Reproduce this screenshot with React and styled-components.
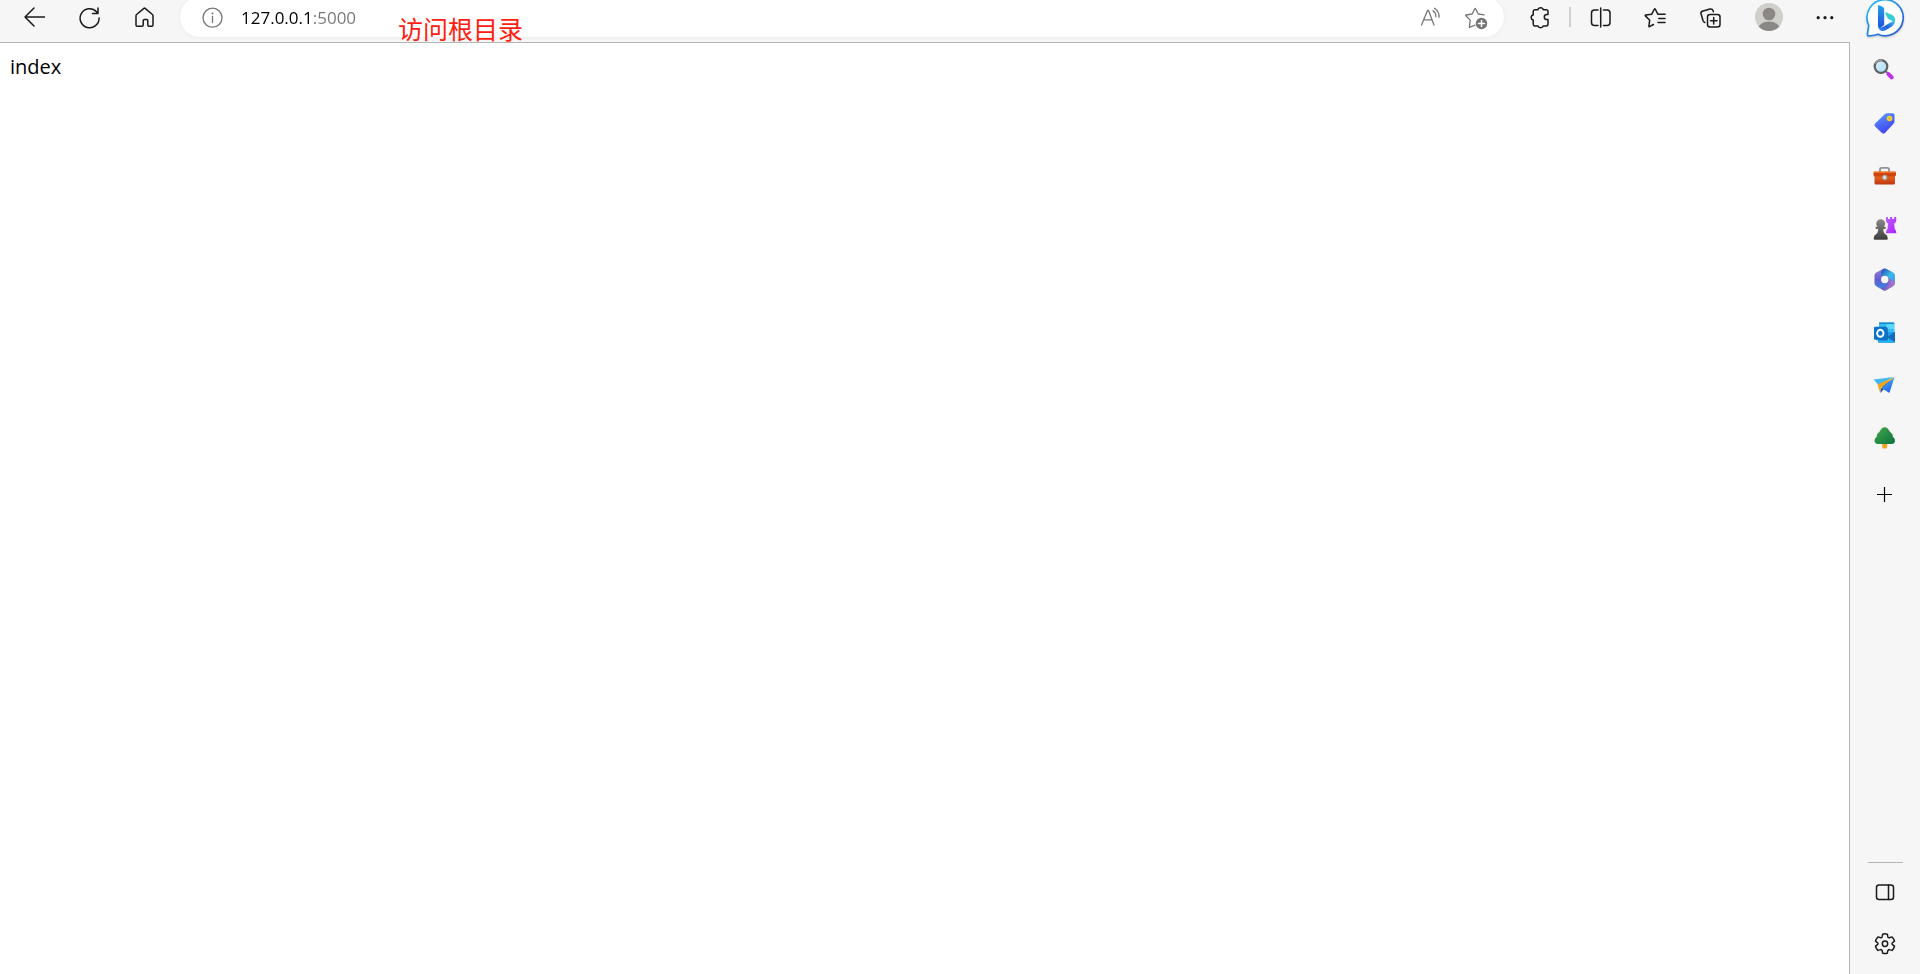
import React from "react";
import styled, { createGlobalStyle } from "styled-components";

const GlobalStyle = createGlobalStyle`
  *, *::before, *::after { box-sizing: border-box; }
  body { margin: 0; background: #f6f6f6; color: #000; font-family: "Open Sans", "Noto Sans CJK SC", sans-serif; }
`;

const Window = styled.div`
  display: grid;
  grid-template-columns: minmax(0, 1fr) 70px;
  min-height: 100vh;
`;

const Main = styled.div`
  display: flex;
  flex-direction: column;
`;

const Toolbar = styled.header`
  position: relative;
  display: flex;
  align-items: center;
  height: 42px;
  padding: 0 0 8px 7px;
`;

const IconButton = styled.button`
  display: flex;
  flex: none;
  align-items: center;
  justify-content: center;
  width: ${(p) => p.$width || 55}px;
  height: 34px;
  padding: 0;
  border: 0;
  background: none;
  color: ${(p) => p.$color || "#1b1b1b"};
`;

const Icon = styled.svg.attrs({ viewBox: "0 0 24 24", "aria-hidden": true })`
  display: block;
  width: 24px;
  height: 24px;
  overflow: visible;
  fill: none;
  stroke: ${(p) => (p.$art ? "none" : "currentColor")};
  stroke-width: 1.5;
  stroke-linecap: round;
  stroke-linejoin: round;
`;

const AddressBar = styled.form`
  display: flex;
  flex: 1;
  align-items: center;
  min-width: 0;
  height: 40px;
  margin: 0 8px;
  padding: 0 6px 0 12px;
  border-radius: 20px;
  background: #fff;
  box-shadow: 0 0 4px rgba(0, 0, 0, 0.06);
`;

const AddressInput = styled.input`
  flex: 1;
  min-width: 0;
  height: 34px;
  padding: 0 0 0 9px;
  border: 0;
  outline: 0;
  color: #111;
  font: 17px/24px "Open Sans", sans-serif;
  background: linear-gradient(90deg, #000 81px, #767676 81px);
  background-clip: text;
  -webkit-background-clip: text;
  -webkit-text-fill-color: transparent;
`;

const Divider = styled.span`
  flex: none;
  width: 2px;
  height: 20px;
  margin: 0 2px;
  background: #d0d0d0;
`;

const Note = styled.span`
  position: absolute;
  left: 398px;
  top: 10px;
  color: #ff2010;
  font: 25px/36px "Noto Sans CJK SC", sans-serif;
  white-space: nowrap;
`;

const Page = styled.main`
  flex: 1;
  padding: 10px;
  border-top: 1px solid #b5b5b5;
  border-right: 1px solid #b5b5b5;
  background: #fff;
  font-size: 20px;
  line-height: 28px;
`;

const Sidebar = styled.aside`
  display: flex;
  flex-direction: column;
  align-items: center;
  padding-bottom: 4px;
`;

const BingButton = styled(IconButton)`
  height: 44px;
  padding-bottom: 6px;
`;

const AppList = styled.nav`
  display: flex;
  flex-direction: column;
  height: 420px;
`;

const AppButton = styled(IconButton)`
  flex: 1;
`;

const SideButton = styled(IconButton)`
  height: ${(p) => p.$height || 52}px;
`;

const Rule = styled.hr`
  width: 35px;
  height: 1px;
  margin: auto 0 3px;
  border: 0;
  background: #b5b5b5;
`;

const BackIcon = () => (
  <Icon><path d="M21.500 12H2M11 3l-9 9 9 9" /></Icon>
);
const RefreshIcon = () => (
  <Icon><path d="M21.100 13A9.500 9.500 0 1 1 18.500 6.700L20 8.400M20 3v5.500h-5.500" /></Icon>
);
const HomeIcon = () => (
  <Icon><path d="M3 10.700q0-.7.6-1.200l7.300-6.100q.6-.5 1.200 0l7.300 6.100q.6.500.6 1.200V20q0 1.200-1.200 1.200h-2.800q-1.200 0-1.200-1.200v-4.300q0-1.200-1.200-1.200h-2.200q-1.200 0-1.200 1.200V20q0 1.200-1.200 1.200H4.200Q3 21.200 3 20z" /></Icon>
);
const InfoIcon = () => (
  <Icon><g strokeWidth="1.300"><circle cx="12.500" cy="12.700" r="9.500" /><path d="M12.500 11.500v6" /></g><circle cx="12.500" cy="8.500" r="1" fill="currentColor" stroke="none" /></Icon>
);
const ReadAloudIcon = () => (
  <Icon><g strokeWidth="1.300"><path d="M2.500 20L8.500 5.500h1L15 20M4.700 14.800h8M14 5.800q3 2.200 2.800 6M15.500 3.300q5 3.600 4.500 9" /></g></Icon>
);
const AddFavoriteIcon = () => (
  <Icon>
    <path strokeWidth="1.300" d="M11 20.200l-5 2q-.7.300-.6-.6l.8-6.500-4.300-4.300q-.6-.6.300-.8l6-1 2.600-5.200q.4-.8.800 0l2.600 5.200 6 .9" />
    <circle cx="17.500" cy="18.500" r="5.700" fill="#737373" stroke="none" />
    <path stroke="#fff" d="M14.500 18.500h6M17.500 15.500v6" />
  </Icon>
);
const PuzzleIcon = () => (
  <Icon><path d="M6.800 4.700h3.200c.2-1.200 1.300-1.900 2.600-1.900s2.400.7 2.600 1.900h3q1.800 0 1.800 1.800v3h-1.200c-1.500 0-2.500 1.100-2.500 2.500s1 2.600 2.500 2.600H20v4.500q0 1.800-1.800 1.800h-3c-.2 1.100-1.300 1.800-2.600 1.800s-2.400-.7-2.600-1.800H6.800q-1.600 0-1.600-1.800v-4C4 14.800 3.200 13.900 3.200 12.500S4 10.200 5.200 10V6.500q0-1.800 1.600-1.800z" /></Icon>
);
const SplitIcon = () => (
  <Icon><path d="M9 5H5.500Q2.500 5 2.500 8v9.500q0 3 3 3H9M11.700 3v19M14.500 5H18q3 0 3 3v9.500q0 3-3 3h-3.500" /></Icon>
);
const FavoritesIcon = () => (
  <Icon><path d="M9.500 19.500l-4 2.200q-.8.400-.6-.5l.8-6-4.300-4.300q-.5-.6.300-.8l6-.9L10.400 4q.4-.7.800 0l2.600 5.200h7.300M14.800 13.500H21M14 17.500h7" /></Icon>
);
const CollectionsIcon = () => (
  <Icon><rect x="8.500" y="9.500" width="12.500" height="12.500" rx="2.500" /><path d="M14.700 12.500v6.500M11.500 15.700H18M5.800 17.500q-1.300-.5-1.800-2L2 8.800Q1.500 7 3.300 6.200L11 4q2.200-.5 3 1.500l.4 1.200" /></Icon>
);
const AvatarArt = styled.svg.attrs({ viewBox: "0 0 28 28", "aria-hidden": true })`
  width: 28px;
  height: 28px;
`;
const MoreIcon = () => (
  <Icon $art><g fill="currentColor"><circle cx="5.200" cy="12.700" r="1.600" /><circle cx="12" cy="12.700" r="1.600" /><circle cx="18.800" cy="12.700" r="1.600" /></g></Icon>
);

const BingArt = styled.svg.attrs({ viewBox: "0 0 40 40", "aria-hidden": true })`
  flex: none;
  width: 40px;
  height: 40px;
  filter: drop-shadow(0 1px 1px rgba(0, 0, 0, 0.2));
`;
const BingIcon = () => (
  <BingArt>
    <defs>
      <linearGradient id="bingRing" x1="0" y1="0" x2="1" y2="1"><stop stopColor="#20c8f4" /><stop offset=".55" stopColor="#247fe0" /><stop offset="1" stopColor="#2454ca" /></linearGradient>
      <linearGradient id="bingStem" x1="0" y1="0" x2="0" y2="1"><stop stopColor="#28a0ec" /><stop offset="1" stopColor="#1d50d8" /></linearGradient>
      <linearGradient id="bingBowl" x1="0" y1="1" x2="1" y2="0"><stop stopColor="#2f8ff0" /><stop offset=".5" stopColor="#2261e4" /><stop offset="1" stopColor="#35c7ef" /></linearGradient>
    </defs>
    <path d="M20.500.700a18 18 0 1 1-7.500 34.500q-3 1.300-8.600 1.700Q2.200 37 2.500 34.500l1.300-8A18 18 0 0 1 20.500.7z" fill="#fff" stroke="url(#bingRing)" strokeWidth="1.700" />
    <path d="M13 6.800q0-1 1-.6l3.500 1.500q1.700.8 1.700 2.600V26l-4.700 3.500q-1.500-1-1.500-3z" fill="url(#bingStem)" />
    <path d="M20.300 14.500q-.4-1.300.9-.9l5 2q3.900 1.700 3.900 5.600 0 2-1.300 3.300-.6-2.500-3-3.500l-2-.8q-1-.4-1.400-1.400z" fill="#30cfd6" />
    <path d="M13 26q.3 3 3 2.500 1.500-.2 3.200-1.300l5.800-3.500q3-1.700 4.900-1.500-.2 3.600-3 5.300l-6.300 3.800q-2.700 1.500-5.100.2-2.500-1.500-2.500-5.500z" fill="url(#bingBowl)" />
  </BingArt>
);

const SearchIcon = () => (
  <Icon $art>
    <defs><linearGradient id="lens" x2="1" y2="1"><stop stopColor="#d9efff" /><stop offset="1" stopColor="#a8ddfb" /></linearGradient></defs>
    <path d="M12.500 13l2.500 2.500" stroke="#777" strokeWidth="2" />
    <path d="M15.500 16.200l3.200 3.200" stroke="#c22ef0" strokeWidth="4" />
    <circle cx="8" cy="8.500" r="6.300" fill="url(#lens)" stroke="#5f5f5f" strokeWidth="2.200" />
    <path d="M3 5A6.500 6.500 0 0 1 8.500 2.200" stroke="#999" strokeWidth="1.800" />
  </Icon>
);
const TagIcon = () => (
  <Icon $art>
    <defs><linearGradient id="tag" x2=".5" y2="1"><stop stopColor="#56a0ff" /><stop offset="1" stopColor="#4544f2" /></linearGradient></defs>
    <path d="M12 3q.8-.8 2-.8h5.800q1.700 0 1.700 1.700v6.500q0 1.300-.8 2.200L12 21.900q-1.500 1.300-3 0l-6.700-6.200q-1.800-1.600-.2-3.200z" fill="url(#tag)" />
    <circle cx="16.500" cy="7.500" r="2" fill="#c5b26b" stroke="#ffd31c" strokeWidth="1.600" />
  </Icon>
);
const ToolboxIcon = () => (
  <Icon $art>
    <defs><linearGradient id="toolbox" x2="0" y2="1"><stop stopColor="#ee6e23" /><stop offset="1" stopColor="#bd3510" /></linearGradient></defs>
    <path d="M7 9V6.500q0-1.700 1.700-1.700h5.600q1.700 0 1.700 1.700V9" stroke="#8d9196" strokeWidth="1.800" />
    <rect x="1.500" y="12" width="20.500" height="9.500" rx="1.500" fill="url(#toolbox)" />
    <path d="M1.500 8.800h20.500q1 0 1 1v2q0 1.700-1.700 1.700H1.800Q.5 13.500.5 11.800v-2q0-1 1-1z" fill="#cd430e" />
    <path d="M1.500 9.300h20.500" stroke="#f17224" />
    <circle cx="11.700" cy="14.500" r="2.400" fill="#d4d6d8" stroke="#8b908d" strokeWidth=".7" />
  </Icon>
);
const ChessIcon = () => (
  <Icon $art>
    <defs>
      <linearGradient id="rook" x2="1" y2="1"><stop stopColor="#b967ff" /><stop offset="1" stopColor="#b01eff" /></linearGradient>
      <linearGradient id="pawn" x2="0" y2="1"><stop stopColor="#8b8b8b" /><stop offset="1" stopColor="#3d3d3d" /></linearGradient>
    </defs>
    <path d="M13 1h2v2h2V1h2.200v2h2V1h2v4q-.2 1.500-2 2.500l.5 5.500q1.500 1 1.500 3.500v.8H13v-.8q0-2.500 1.500-3.500l.5-5.500q-1.800-1-2-2.500z" fill="url(#rook)" />
    <path d="M4.500 10.800a4.500 4.500 0 1 1 6.400 0h1q1 0 1 1t-1 1.200h-1.700q.2 3.800 1.500 4.800 3 1.500 3 4.200v.8q0 1-1 1H1.700q-1 0-1-1V22q0-2.700 3-4.200 1.300-1 1.500-4.800H3.500q-1 0-1-1.200t1-1z" fill="url(#pawn)" />
  </Icon>
);
const OfficeIcon = () => (
  <Icon $art>
    <defs>
      <linearGradient id="hexLeft" x2="0" y2="1"><stop stopColor="#a477dc" /><stop offset=".5" stopColor="#635bd0" /><stop offset="1" stopColor="#358edf" /></linearGradient>
      <linearGradient id="hexRight" x2="1" y2="1"><stop stopColor="#2444ad" /><stop offset=".55" stopColor="#3abbeb" /><stop offset="1" stopColor="#3999e1" /></linearGradient>
      <linearGradient id="hexBottom" x2="1"><stop stopColor="#624bc1" /><stop offset="1" stopColor="#b076cc" /></linearGradient>
      <mask id="hexHole"><path fill="#fff" d="M0 0h24v24H0z" /><circle cx="11.700" cy="11.500" r="3.700" fill="#000" /></mask>
    </defs>
    <g mask="url(#hexHole)">
      <path d="M10 .9q1.700-1 3.400 0l6.500 3.700q1.800 1 1.800 3v7.600q0 2-1.800 3.100l-6.500 3.800q-1.700 1-3.400 0l-6.700-3.800q-1.800-1.100-1.800-3.100V7.600q0-2 1.800-3z" fill="url(#hexLeft)" />
      <path d="M10 .9q1.700-1 3.400 0l6.500 3.700q1.800 1 1.800 3v7q-.5 1.500-2.500.5L15.500 13V9.500L11.700 7 8 9.500V4.200Q8 2 10 .9z" fill="url(#hexRight)" />
      <path d="M15.500 9.500v6.300q0 1.500-1.500 2.300l-5 2.400q-2.200.6-4.400-1.600l5.400 3.200q1.700 1 3.400 0l6.500-3.800q1.800-1.100 1.800-3.100v-2.700q-.8 1.200-2.500.3z" fill="url(#hexBottom)" />
    </g>
  </Icon>
);
const OutlookIcon = () => (
  <Icon $art>
    <path d="M7 1.500h13.500q1 0 1 1V12H6V2.500q0-1 1-1z" fill="#37bdf2" />
    <path d="M6 1.500h15V3H6z" fill="#1686cf" />
    <path d="M13.500 3h7.500v5h-7.500z" fill="#59d7ff" />
    <path d="M5 11h17v9.700q0 1-1 1H6q-1 0-1-1z" fill="#1f9cea" />
    <path d="M14 16l8-5v10z" fill="#146bb9" />
    <path d="M5 12l16.500 9.500-.5.200H6q-1 0-1-1z" fill="#27b0f4" />
    <rect x="3" y="6.500" width="12" height="13" rx="1.500" fill="#084b8d" opacity=".55" />
    <rect x="1" y="5.800" width="13" height="13" rx="1.200" fill="#0873cb" />
    <ellipse cx="7.300" cy="12.300" rx="3.200" ry="3.500" stroke="#fff" strokeWidth="1.900" />
  </Icon>
);
const PlaneIcon = () => (
  <Icon $art>
    <defs><linearGradient id="wing" x2=".5" y2="1"><stop stopColor="#47c5f4" /><stop offset="1" stopColor="#2263ed" /></linearGradient></defs>
    <path d="M6 12.500l14.500-6-13 9.500V20l3-3.500 3 .5z" fill="#17539e" />
    <path d="M21.500 4L9 15l6.500 4.500q.8.600 1.200-.5z" fill="url(#wing)" />
    <path d="M.5 6.500L21 4 5.500 12z" fill="#41b8ee" />
    <path d="M4.500 11.500L21.500 4 8.500 14.500 6.800 19z" fill="#f4a51c" />
  </Icon>
);
const TreeIcon = () => (
  <Icon $art>
    <defs><linearGradient id="leaves" x2="1" y2="1"><stop stopColor="#48a84c" /><stop offset="1" stopColor="#08723d" /></linearGradient></defs>
    <path d="M9.200 15h5v6q0 1.500-1.500 1.500h-2q-1.500 0-1.500-1.500z" fill="#eda51e" />
    <path d="M8.700 2.500q3-2.700 6 0 2.200 3.500 4.300 5.300 1 1 .7 2.600 2.300 2.100 2.300 4.300 0 3-3.500 3.300h-13.500Q1.500 17.700 1.500 14.700q0-2.200 2.300-4.300-.3-1.600.7-2.600 2-1.800 4.200-5.300z" fill="url(#leaves)" />
  </Icon>
);
const PlusIcon = () => (
  <Icon><path strokeLinecap="butt" d="M4 11.500h15M11.500 4v15" strokeWidth="1.200" stroke="#000" /></Icon>
);
const PanelIcon = () => (
  <Icon><rect x="3.500" y="5" width="17" height="14.500" rx="2.500" /><path d="M15.500 5v14.500" /></Icon>
);
const GearIcon = () => (
  <Icon><path d="M9.700 2.200q2.300-.7 4.600 0l.6 2.700q.3.800 1.300.9l2.900-.9q1.700 1.800 2.400 4.200l-2.300 1.900q-.5.700 0 1.300l2.300 1.900q-.7 2.400-2.400 4.200l-2.900-.8q-.9.100-1.300.9l-.6 2.700q-2.300.7-4.600 0L9.100 18.500q-.4-.8-1.300-.9l-2.900.8q-1.700-1.800-2.400-4.200l2.300-1.900q.5-.6 0-1.300L2.500 9.100q.7-2.400 2.400-4.200l2.900.9q1-.1 1.300-.9z" /><circle cx="12" cy="11.700" r="2.700" /></Icon>
);

const apps = [
  ["Search", SearchIcon],
  ["Shopping", TagIcon],
  ["Tools", ToolboxIcon],
  ["Games", ChessIcon],
  ["Microsoft 365", OfficeIcon],
  ["Outlook", OutlookIcon],
  ["Drop", PlaneIcon],
  ["E-tree", TreeIcon],
];

export default function App() {
  return (
    <>
      <GlobalStyle />
      <Window>
        <Main>
          <Toolbar>
            <IconButton aria-label="Back"><BackIcon /></IconButton>
            <IconButton aria-label="Refresh"><RefreshIcon /></IconButton>
            <IconButton aria-label="Home"><HomeIcon /></IconButton>
            <AddressBar onSubmit={(e) => e.preventDefault()}>
              <IconButton type="button" $width={40} $color="#767676" aria-label="Site information"><InfoIcon /></IconButton>
              <AddressInput type="text" aria-label="Address" defaultValue="127.0.0.1:5000" spellCheck={false} />
              <IconButton type="button" $width={45} $color="#767676" aria-label="Read aloud"><ReadAloudIcon /></IconButton>
              <IconButton type="button" $width={45} $color="#767676" aria-label="Add to favorites"><AddFavoriteIcon /></IconButton>
            </AddressBar>
            <IconButton aria-label="Extensions"><PuzzleIcon /></IconButton>
            <Divider />
            <IconButton aria-label="Split screen"><SplitIcon /></IconButton>
            <IconButton aria-label="Favorites"><FavoritesIcon /></IconButton>
            <IconButton aria-label="Collections"><CollectionsIcon /></IconButton>
            <IconButton $width={62} aria-label="Profile">
              <AvatarArt>
                <defs><clipPath id="avatar"><circle cx="14" cy="14" r="14" /></clipPath></defs>
                <g clipPath="url(#avatar)">
                  <path fill="#d1cfcc" d="M0 0h28v28H0z" />
                  <circle cx="14" cy="11" r="6.300" fill="#8b8784" />
                  <ellipse cx="14" cy="26" rx="11" ry="7.500" fill="#8b8784" />
                </g>
              </AvatarArt>
            </IconButton>
            <IconButton $width={50} aria-label="More"><MoreIcon /></IconButton>
            <Note>访问根目录</Note>
          </Toolbar>
          <Page>index</Page>
        </Main>
        <Sidebar>
          <BingButton aria-label="Bing"><BingIcon /></BingButton>
          <AppList aria-label="Sidebar apps">
            {apps.map(([name, Art]) => (
              <AppButton key={name} aria-label={name}><Art /></AppButton>
            ))}
          </AppList>
          <SideButton $height={62} aria-label="Customize"><PlusIcon /></SideButton>
          <Rule />
          <SideButton aria-label="Hide sidebar"><PanelIcon /></SideButton>
          <SideButton aria-label="Settings"><GearIcon /></SideButton>
        </Sidebar>
      </Window>
    </>
  );
}
